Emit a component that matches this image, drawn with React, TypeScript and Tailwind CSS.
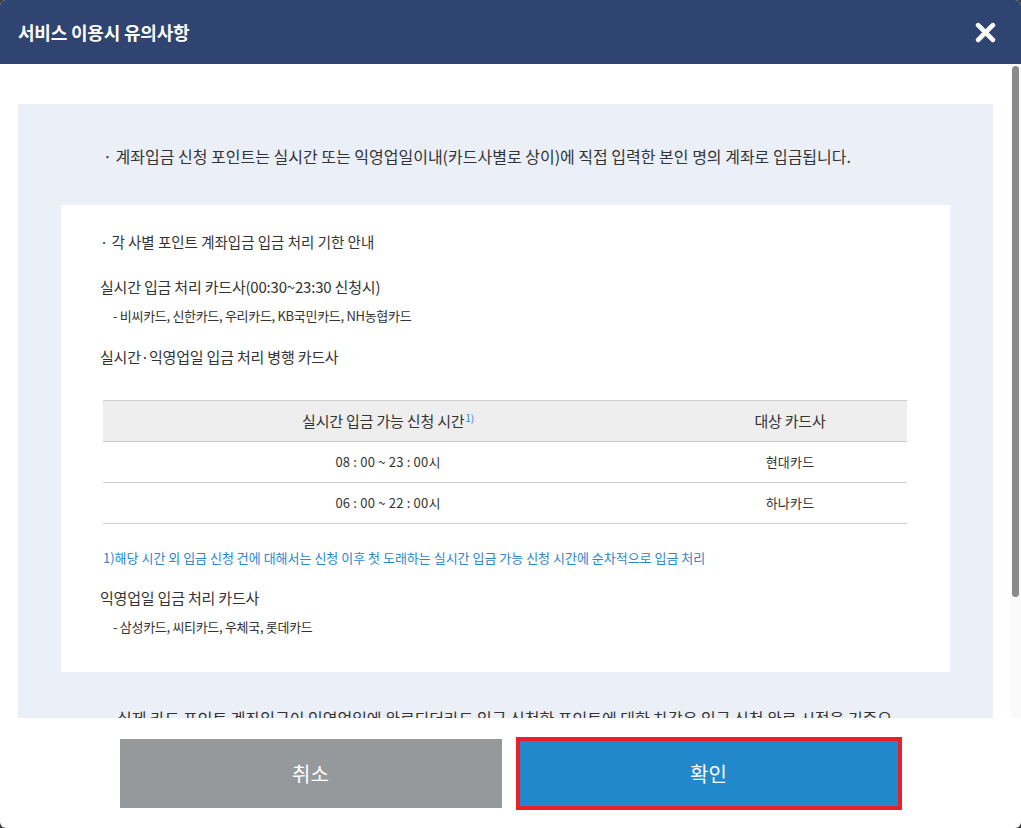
import React from "react";

const rows = [
	{ time: "08 : 00 ~ 23 : 00시", card: "현대카드" },
	{ time: "06 : 00 ~ 22 : 00시", card: "하나카드" },
];

export default function App() {
	return (
		<div className="h-[828px] w-[1021px] bg-[#3a3a3a] font-['Noto_Sans_CJK_KR',sans-serif] text-[#333]">
			<div className="flex h-full flex-col overflow-hidden rounded-[6px] bg-white">
				{/* header */}
				<div className="flex h-16 shrink-0 items-center justify-between bg-[#2f4470] pl-[18px] pr-[24px]">
					<h1 className="text-[18px] font-bold tracking-[-0.2px] text-white">서비스 이용시 유의사항</h1>
					<button className="flex h-6 w-6 items-center justify-center">
						<svg width="21" height="21" viewBox="0 0 20 20">
							<path d="M3 3 L17 17 M17 3 L3 17" stroke="white" strokeWidth="4.5" strokeLinecap="round" />
						</svg>
					</button>
				</div>

				{/* body */}
				<div className="flex h-[654px] shrink-0">
					<div className="flex-1 overflow-hidden px-[18px] pt-10">
						<div className="bg-[#eaeff8] px-[43px] pt-[41px] pb-10">
							<p className="pl-[42px] text-[16px] leading-[22px]">
								· 계좌입금 신청 포인트는 실시간 또는 익영업일이내(카드사별로 상이)에 직접 입력한 본인 명의 계좌로 입금됩니다.
							</p>

							<div className="mt-[38px] bg-white px-[39px] pt-[27px] pb-[36px]">
								<p className="text-[14.5px] leading-5">· 각 사별 포인트 계좌입금 입금 처리 기한 안내</p>
								<p className="mt-[25px] text-[15px] leading-5 tracking-[-0.2px]">실시간 입금 처리 카드사(00:30~23:30 신청시)</p>
								<p className="mt-[10px] pl-[13px] text-[13px] leading-[18px] tracking-[-0.3px]">- 비씨카드, 신한카드, 우리카드, KB국민카드, NH농협카드</p>
								<p className="mt-[22px] text-[15px] leading-5 tracking-[-0.2px]">실시간·익영업일 입금 처리 병행 카드사</p>

								<table className="mx-[3px] mt-[33px] w-[804px] border-collapse text-center">
									<thead>
										<tr className="h-[41px] border-y border-[#cccccc] bg-[#eeeeee]">
											<th className="w-[570px] text-[15px] font-normal tracking-[-0.2px]">
												실시간 입금 가능 신청 시간
												<sup className="ml-px text-[10px] text-[#2b86d0]">1)</sup>
											</th>
											<th className="text-[15px] font-normal tracking-[-0.2px]">대상 카드사</th>
										</tr>
									</thead>
									<tbody>
										{rows.map((r) => (
											<tr key={r.card} className="h-[41px] border-b border-[#cccccc]">
												<td className="text-[13px] tracking-[0.2px]">{r.time}</td>
												<td className="text-[13px] tracking-[0.2px]">{r.card}</td>
											</tr>
										))}
									</tbody>
								</table>

								<p className="mt-[25px] pl-[3px] text-[13px] leading-[18px] text-[#2b86d0]">
									1)해당 시간 외 입금 신청 건에 대해서는 신청 이후 첫 도래하는 실시간 입금 가능 신청 시간에 순차적으로 입금 처리
								</p>
								<p className="mt-[21px] text-[15px] leading-5 tracking-[-0.2px]">익영업일 입금 처리 카드사</p>
								<p className="mt-[10px] pl-[13px] text-[13px] leading-[18px] tracking-[-0.3px]">- 삼성카드, 씨티카드, 우체국, 롯데카드</p>
							</div>

							<p className="mt-[35px] pl-[56px] pr-[46px] text-[16px] leading-[22px]">
								실제 카드 포인트 계좌입금이 익영업일에 완료되더라도 입금 신청한 포인트에 대한 차감은 입금 신청 완료 시점을 기준으로 합니다.
							</p>
						</div>
					</div>
					<div className="w-[10px] shrink-0 bg-[#fafafa]">
						<div className="mt-[2px] ml-px h-[531px] w-[7px] rounded-full bg-[#8a8a8a]" />
					</div>
				</div>

				{/* footer */}
				<div className="flex flex-1 items-start justify-center gap-[14px] pt-[19px]">
					<button className="mt-[2px] h-[69px] w-[382px] bg-[#95999c] text-[20px] text-white">취소</button>
					<button className="h-[73px] w-[386px] border-4 border-[#e8202a] bg-[#2288cc] text-[20px] text-white">확인</button>
				</div>
			</div>
		</div>
	);
}
